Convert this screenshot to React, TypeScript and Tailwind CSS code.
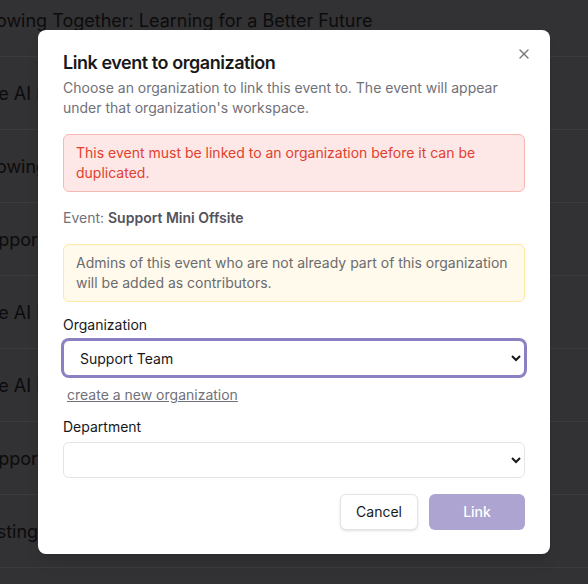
import { X } from 'lucide-react';

const rows = [
    'Growing Together: Learning for a Better Future',
    'The AI Boom: What Comes Next',
    'Growing Teams Summit',
    'Support Mini Offsite',
    'The AI Breakfast Club',
    'The AI Builders Meetup',
    'Support Mini Offsite',
    'Testing Event',
];

export default function App() {
    return (
        <div
            className="relative h-[584px] w-[588px] overflow-hidden bg-[#323133]"
            style={{ fontFamily: 'Inter, "Noto Sans", sans-serif' }}
        >
            <div className="-mt-[16px] -ml-[24px]">
                {rows.map((row, i) => (
                    <div key={i} className="flex h-[73px] items-center border-b border-[#3b3a3c] text-[18px] text-[#0c0c0d]">
                        {row}
                    </div>
                ))}
            </div>

            <div className="absolute inset-0 flex items-center justify-center">
                <div className="relative grid w-full max-w-lg gap-4 rounded-lg bg-white px-[25px] py-6 shadow-lg">
                    <button className="absolute right-[18px] top-4 text-[#3f3f46] opacity-70">
                        <X className="h-4 w-4" />
                    </button>

                    <div className="flex flex-col space-y-1.5">
                        <h2 className="text-lg font-semibold leading-none tracking-tight text-[#18181b]">
                            Link event to organization
                        </h2>
                        <p className="text-sm text-[#71717a]">
                            Choose an organization to link this event to. The event will appear under that organization's workspace.
                        </p>
                    </div>

                    <div className="rounded-md border border-[#f7b8b1] bg-[#fee8e7] px-3 py-2 text-sm text-[#e0412d]">
                        This event must be linked to an organization before it can be duplicated.
                    </div>

                    <p className="text-sm text-[#71717a]">
                        Event: <span className="font-semibold text-[#52525b]">Support Mini Offsite</span>
                    </p>

                    <div className="rounded-md border border-[#fde8a4] bg-[#fffaeb] px-3 py-2 text-sm text-[#6b6b70]">
                        Admins of this event who are not already part of this organization will be added as contributors.
                    </div>

                    <div>
                        <label className="block text-sm leading-none text-[#18181b]">Organization</label>
                        <select
                            defaultValue="support"
                            className="mt-2 h-9 w-full rounded-md border border-[#8a80c2] bg-white px-3 text-sm text-[#18181b] outline-none ring-2 ring-[#8a80c2]"
                        >
                            <option value="support">Support Team</option>
                        </select>
                        <button className="mt-[9px] block px-1 text-sm leading-5 text-[#71717a] underline">create a new organization</button>
                    </div>

                    <div className="-mt-px space-y-2">
                        <label className="block text-sm leading-none text-[#18181b]">Department</label>
                        <select className="h-9 w-full rounded-md border border-[#e4e4e7] bg-white px-3 text-sm text-[#18181b] outline-none">
                            <option value=""></option>
                        </select>
                    </div>

                    <div className="flex justify-end gap-[11px]">
                        <button className="h-9 rounded-md border border-[#e4e4e7] bg-white px-[15px] text-sm text-[#18181b] shadow-sm">
                            Cancel
                        </button>
                        <button disabled className="h-9 w-24 rounded-md bg-[#ada4d1] text-sm font-medium text-white">
                            Link
                        </button>
                    </div>
                </div>
            </div>
        </div>
    );
}
